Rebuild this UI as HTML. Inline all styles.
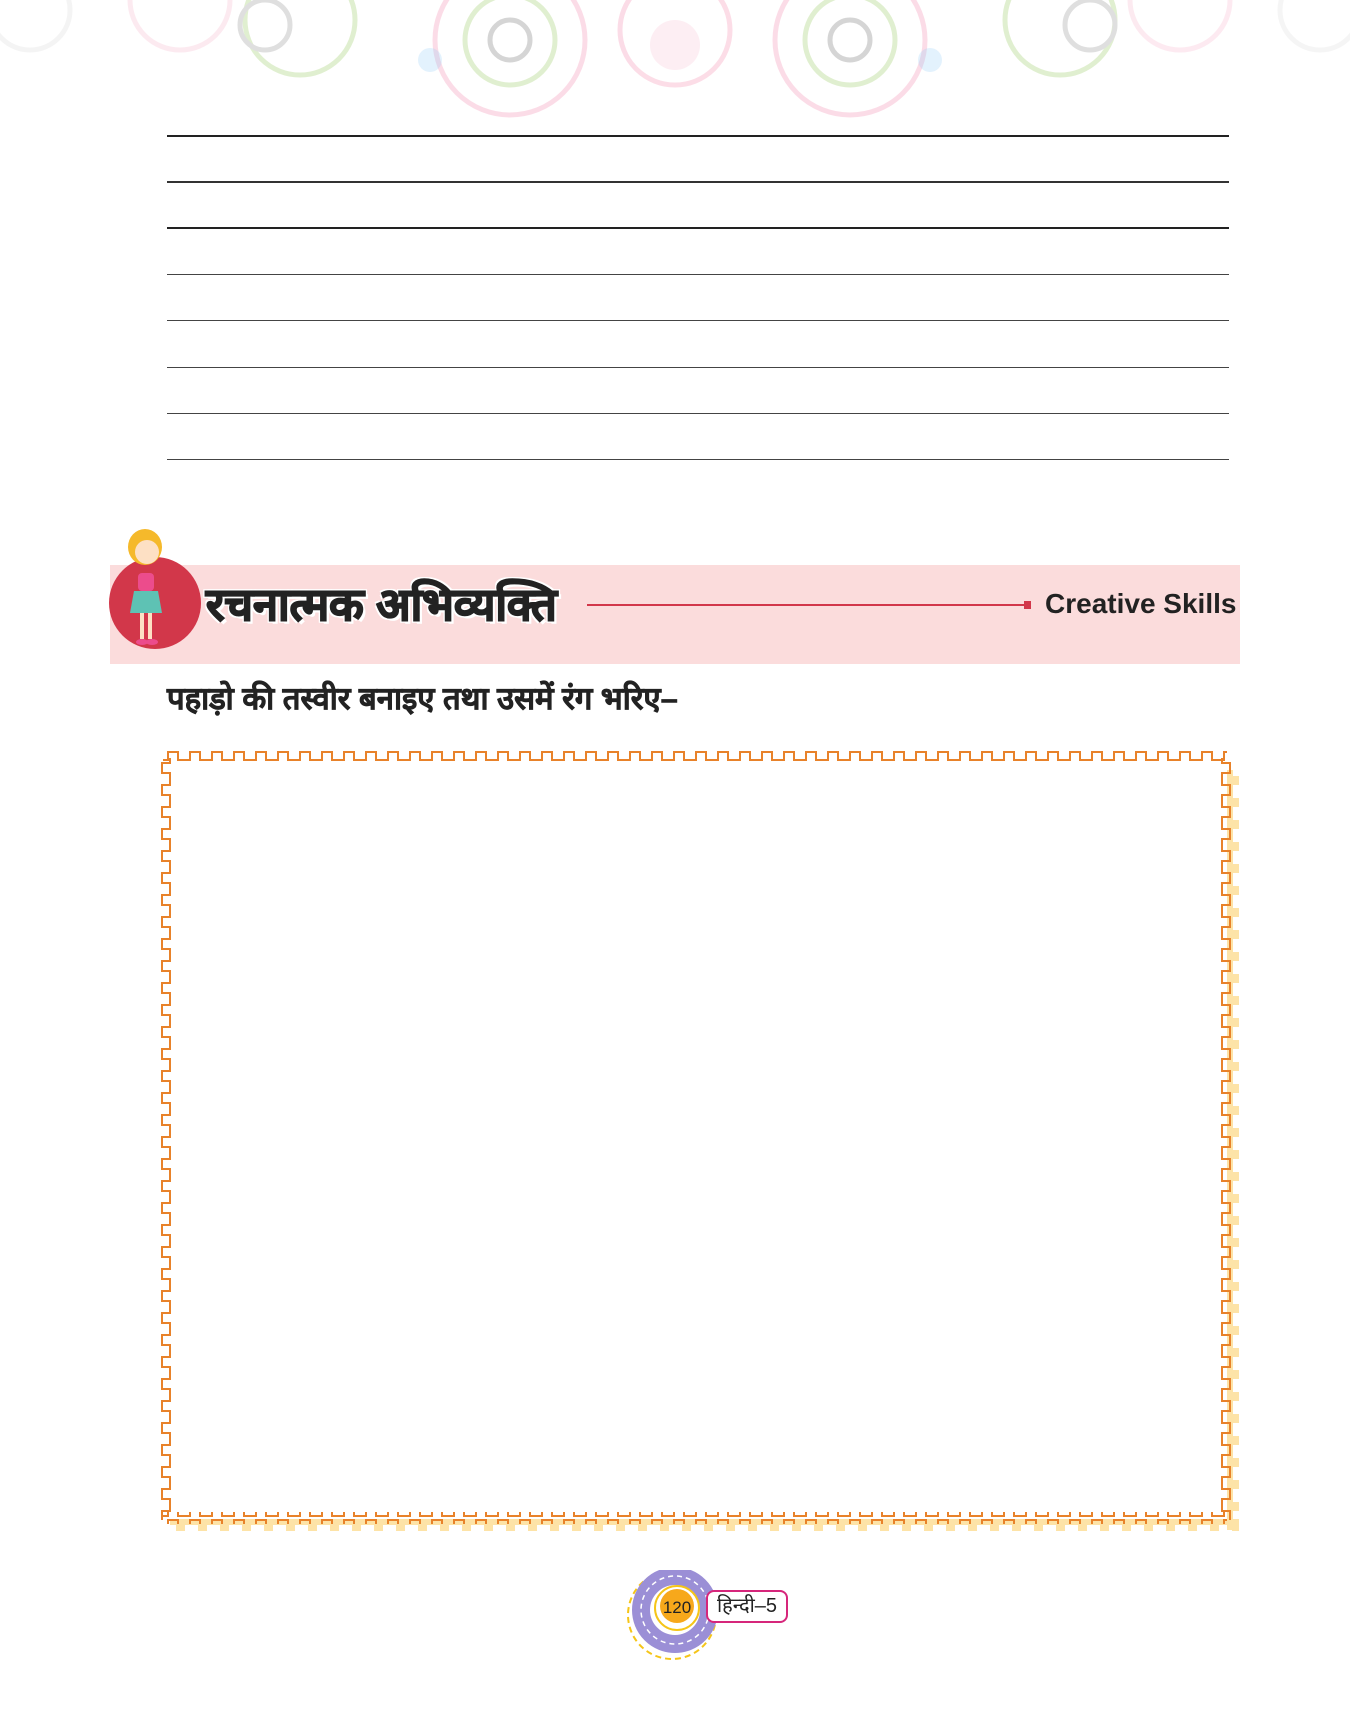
<!DOCTYPE html>
<html><head><meta charset="utf-8">
<style>
html,body{margin:0;padding:0;background:#fff;}
body{width:1350px;height:1725px;position:relative;overflow:hidden;font-family:"Liberation Sans","Noto Sans CJK SC",sans-serif;}
.ln{position:absolute;left:167px;width:1062px;height:1px;background:#444;}
.banner{position:absolute;left:110px;top:565px;width:1130px;height:99px;background:#fbdcdc;}
.title{position:absolute;left:206px;top:573px;font-size:45px;font-weight:bold;color:#222;white-space:nowrap;-webkit-text-stroke:1.5px #222;text-shadow:2px 2px 0 #fff,-2px -2px 0 #fff,2px -2px 0 #fff,-2px 2px 0 #fff,3px 3px 0 #fff;}
.cs{position:absolute;left:1045px;top:588px;font-size:28px;font-weight:bold;color:#222;white-space:nowrap;}
.inst{position:absolute;left:167px;top:677px;font-size:31px;font-weight:bold;color:#222;white-space:nowrap;-webkit-text-stroke:0.6px #222;}
</style></head><body>
<svg style="position:absolute;left:0;top:0" width="1350" height="150">
<g opacity="0.3" fill="none" stroke-width="5">
<circle cx="300" cy="20" r="55" stroke="#9ccc65"/>
<circle cx="265" cy="25" r="25" stroke="#999"/>
<circle cx="510" cy="40" r="75" stroke="#f48fb1"/>
<circle cx="510" cy="40" r="45" stroke="#9ccc65"/>
<circle cx="510" cy="40" r="20" stroke="#777"/>
<circle cx="675" cy="30" r="55" stroke="#f48fb1"/>
<circle cx="850" cy="40" r="75" stroke="#f48fb1"/>
<circle cx="850" cy="40" r="45" stroke="#9ccc65"/>
<circle cx="850" cy="40" r="20" stroke="#777"/>
<circle cx="1060" cy="20" r="55" stroke="#9ccc65"/>
<circle cx="1090" cy="25" r="25" stroke="#999"/>
<circle cx="180" cy="0" r="50" stroke="#f8bbd0"/>
<circle cx="1180" cy="0" r="50" stroke="#f8bbd0"/>
<circle cx="30" cy="10" r="40" stroke="#ddd"/>
<circle cx="1320" cy="10" r="40" stroke="#ddd"/>
</g>
<g opacity="0.25">
<circle cx="675" cy="45" r="25" fill="#f8bbd0"/>
<circle cx="430" cy="60" r="12" fill="#90caf9"/>
<circle cx="930" cy="60" r="12" fill="#90caf9"/>
</g>
</svg>
<div class="ln" style="top:135px;height:2px;background:#222"></div>
<div class="ln" style="top:181px;height:2px;background:#333"></div>
<div class="ln" style="top:227px;height:2px;background:#222"></div>
<div class="ln" style="top:274px"></div>
<div class="ln" style="top:320px"></div>
<div class="ln" style="top:367px"></div>
<div class="ln" style="top:413px"></div>
<div class="ln" style="top:459px"></div>

<div class="banner"></div>
<svg style="position:absolute;left:100px;top:525px" width="120" height="150">
<circle cx="55" cy="78" r="46" fill="#d2374a"/>
<ellipse cx="45" cy="22" rx="17" ry="18" fill="#f5b92b"/>
<circle cx="47" cy="27" r="12" fill="#fde0c4"/>
<rect x="38" y="48" width="16" height="18" rx="4" fill="#ec4c8c"/>
<path d="M34 66 L58 66 L62 88 L30 88 Z" fill="#5ec2b4"/>
<rect x="40" y="88" width="4" height="26" fill="#fde0c4"/>
<rect x="48" y="88" width="4" height="26" fill="#fde0c4"/>
<ellipse cx="42" cy="117" rx="6" ry="3" fill="#ec4c8c"/>
<ellipse cx="52" cy="117" rx="6" ry="3" fill="#ec4c8c"/>
</svg>
<div class="title">रचनात्मक अभिव्यक्ति</div>
<div style="position:absolute;left:587px;top:604px;width:440px;height:2px;background:#d2374a"></div>
<div style="position:absolute;left:1024px;top:601px;width:7px;height:8px;background:#d2374a"></div>
<div class="cs">Creative Skills</div>
<div class="inst">पहाड़ो की तस्वीर बनाइए तथा उसमें रंग भरिए–</div>

<svg style="position:absolute;left:0;top:0" width="1350" height="1725">
<defs>
<pattern id="ph" x="163" y="750" width="22" height="12" patternUnits="userSpaceOnUse">
<path d="M0 10 H5 V2 H15 V10 H22" fill="none" stroke="#e8822a" stroke-width="2"/>
</pattern>
<pattern id="pv" x="160" y="758" width="12" height="22" patternUnits="userSpaceOnUse">
<path d="M10 0 V5 H2 V15 H10 V22" fill="none" stroke="#e8822a" stroke-width="2"/>
</pattern>
<pattern id="pvr" x="1220" y="758" width="12" height="22" patternUnits="userSpaceOnUse">
<path d="M2 0 V5 H10 V15 H2 V22" fill="none" stroke="#e8822a" stroke-width="2"/>
</pattern>
<pattern id="yh" x="170" y="1519" width="22" height="12" patternUnits="userSpaceOnUse">
<rect x="0" y="0" width="22" height="6" fill="#fde3a7"/><rect x="6" y="6" width="9" height="6" fill="#fde3a7"/>
</pattern>
<pattern id="yv" x="1227" y="770" width="12" height="22" patternUnits="userSpaceOnUse">
<rect x="0" y="0" width="6" height="22" fill="#fde3a7"/><rect x="6" y="6" width="6" height="9" fill="#fde3a7"/>
</pattern>
</defs>
<rect x="170" y="1519" width="1069" height="12" fill="url(#yh)"/>
<rect x="1227" y="770" width="12" height="760" fill="url(#yv)"/>
<rect x="163" y="750" width="1064" height="12" fill="url(#ph)"/>
<rect x="160" y="758" width="12" height="762" fill="url(#pv)"/>
<rect x="1220" y="758" width="12" height="762" fill="url(#pvr)"/>
<rect x="163" y="1512" width="1064" height="12" fill="url(#ph)"/>
</svg>

<svg style="position:absolute;left:620px;top:1570px" width="100" height="100">
<circle cx="52" cy="45" r="44" fill="none" stroke="#f5c518" stroke-width="2" stroke-dasharray="6 4"/>
<circle cx="55" cy="40" r="34" fill="none" stroke="#9b8fd6" stroke-width="18"/>
<circle cx="55" cy="40" r="34" fill="none" stroke="#fff" stroke-width="1.5" stroke-dasharray="5 4"/>
<circle cx="57" cy="38" r="22" fill="none" stroke="#f5c518" stroke-width="2"/>
<circle cx="57" cy="36" r="17" fill="#f7a81b"/>
<text x="57" y="43" text-anchor="middle" font-family="Liberation Sans" font-size="17" fill="#222">120</text>
</svg>
<div style="position:absolute;left:706px;top:1590px;width:78px;height:29px;border:2px solid #d6267b;border-radius:8px;background:#fff;font-size:20px;line-height:29px;text-align:center;color:#222;">हिन्दी–5</div>
</body></html>
